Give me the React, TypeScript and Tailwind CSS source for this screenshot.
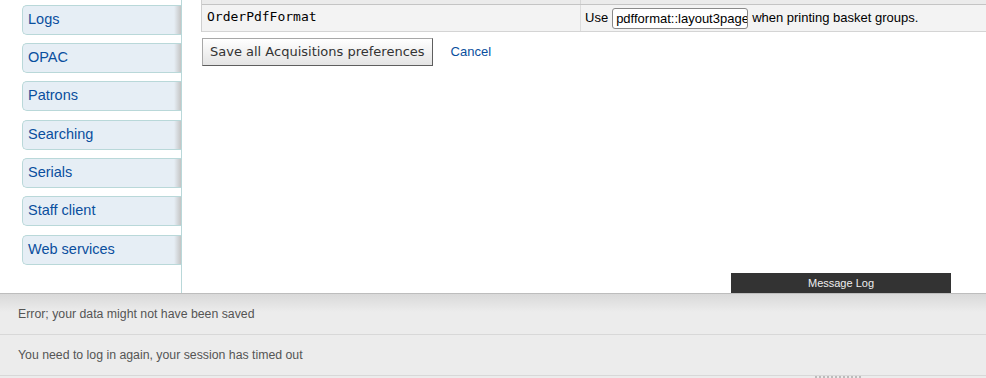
const tabs = [
    { label: "Logs", extra: false },
    { label: "OPAC", extra: false },
    { label: "Patrons", extra: false },
    { label: "Searching", extra: true },
    { label: "Serials", extra: false },
    { label: "Staff client", extra: false },
    { label: "Web services", extra: true },
];

const messages = [
    "Error; your data might not have been saved",
    "You need to log in again, your session has timed out",
];

function SideTabs() {
    return (
        <div className="w-[182px] shrink-0 border-r border-[#b9d8d9] pl-[22px] pt-[5px] flex flex-col gap-[8px]">
            {tabs.map((tab) => (
                <div
                    key={tab.label}
                    className={`${tab.extra ? "mt-px" : ""} h-[30px] flex items-center pl-[5px] rounded-l-[5px] border border-r-0 border-[#b9d8d9] bg-[linear-gradient(to_right,#e6eef5_0,#e6eef5_calc(100%-7px),#c4c4c4_100%)] text-[14.5px] text-[#0a4f9e]`}
                >
                    {tab.label}
                </div>
            ))}
        </div>
    );
}

function Main() {
    return (
        <div className="flex-1 flex flex-col pl-[19px] min-w-0">
            <div className="border-l border-[#cfcfcf]">
                <div className="h-[5px] flex bg-[#ebebeb] border-b border-[#c4c4c4]">
                    <div className="w-[379px] border-r border-[#d6d6d6]" />
                </div>
                <div className="h-[27px] flex bg-[#f3f3f3] border-b border-[#d4d4d4]">
                    <div className="w-[379px] border-r border-[#dcdcdc] pl-[5px] pt-[2px] font-['DejaVu_Sans_Mono',monospace] text-[13px] text-black">
                        OrderPdfFormat
                    </div>
                    <div className="flex items-center pl-[4px] text-[13px] text-black whitespace-nowrap">
                        <span>Use</span>
                        <div className="ml-[4px] w-[136px] h-[21px] border border-[#8a8a8a] rounded-[3px] bg-white overflow-hidden pl-[3px] leading-[19px]">
                            pdfformat::layout3pages
                        </div>
                        <span className="ml-[4px]">when printing basket groups.</span>
                    </div>
                </div>
            </div>

            <div className="flex items-center mt-[6px]">
                <button className="ml-px h-[28px] px-[7px] border border-[#a8a8a8] border-r-[#5e5e5e] border-b-[#5e5e5e] bg-[linear-gradient(#ffffff,#e4e4e4)] font-['DejaVu_Sans',sans-serif] text-[13px] text-[#333]">
                    Save all Acquisitions preferences
                </button>
                <a className="ml-[18px] text-[13px] text-[#0a4f9e]">Cancel</a>
            </div>

            <div className="flex-1" />
            <div className="ml-[530px] w-[220px] h-[20px] bg-[#333] text-[#eee] text-[11px] flex items-center justify-center">
                Message Log
            </div>
        </div>
    );
}

export default function App() {
    return (
        <div className="w-[986px] h-[378px] overflow-hidden flex flex-col bg-white font-['Liberation_Sans',Arial,sans-serif]">
            <div className="h-[293px] flex shrink-0">
                <SideTabs />
                <Main />
            </div>
            <div className="flex-1 relative border-t border-[#bdbdbd] bg-[linear-gradient(#d9d9d9_0,#ececec_18px,#ececec_100%)]">
                {messages.map((msg) => (
                    <div
                        key={msg}
                        className="h-[41px] flex items-center pl-[18px] border-b border-[#d8d8d8] text-[12.3px] text-[#555]"
                    >
                        {msg}
                    </div>
                ))}
                <div className="absolute left-[815px] bottom-0 w-[46px] h-[2px] border-t-2 border-dotted border-[#bbb]" />
            </div>
        </div>
    );
}
